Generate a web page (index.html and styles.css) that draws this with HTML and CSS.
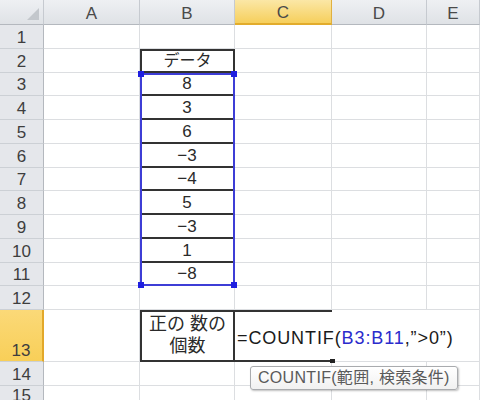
FILE: index.html
```html
<!DOCTYPE html>
<html lang="ja">
<head>
<meta charset="utf-8">
<link rel="stylesheet" href="styles.css">
</head>
<body>
<div class="sheet">
  <div class="h corner"><span class="tri"></span></div>
  <div class="h">A</div>
  <div class="h">B</div>
  <div class="h on">C</div>
  <div class="h">D</div>
  <div class="h">E</div>

  <div class="r">1</div><div class="c"></div><div class="c"></div><div class="c"></div><div class="c"></div><div class="c"></div>
  <div class="r">2</div><div class="c"></div><div class="c box">データ</div><div class="c"></div><div class="c"></div><div class="c"></div>
  <div class="r">3</div><div class="c"></div><div class="c v">8</div><div class="c"></div><div class="c"></div><div class="c"></div>
  <div class="r">4</div><div class="c"></div><div class="c v">3</div><div class="c"></div><div class="c"></div><div class="c"></div>
  <div class="r">5</div><div class="c"></div><div class="c v">6</div><div class="c"></div><div class="c"></div><div class="c"></div>
  <div class="r">6</div><div class="c"></div><div class="c v">−3</div><div class="c"></div><div class="c"></div><div class="c"></div>
  <div class="r">7</div><div class="c"></div><div class="c v">−4</div><div class="c"></div><div class="c"></div><div class="c"></div>
  <div class="r">8</div><div class="c"></div><div class="c v">5</div><div class="c"></div><div class="c"></div><div class="c"></div>
  <div class="r">9</div><div class="c"></div><div class="c v">−3</div><div class="c"></div><div class="c"></div><div class="c"></div>
  <div class="r">10</div><div class="c"></div><div class="c v">1</div><div class="c"></div><div class="c"></div><div class="c"></div>
  <div class="r">11</div><div class="c"></div><div class="c v last">−8</div><div class="c"></div><div class="c"></div><div class="c"></div>
  <div class="r">12</div><div class="c"></div><div class="c"></div><div class="c"></div><div class="c"></div><div class="c"></div>
  <div class="r on">13</div><div class="c"></div><div class="c label">正の 数の<br>個数</div><div class="c edit"><span class="formula">=COUNTIF(<span class="ref">B3:B11</span>,”&gt;0”)</span><span class="fill"></span></div><div class="c open"></div><div class="c"></div>
  <div class="r">14</div><div class="c"></div><div class="c"></div><div class="c"></div><div class="c"></div><div class="c"></div>
  <div class="r">15</div><div class="c"></div><div class="c"></div><div class="c"></div><div class="c"></div><div class="c"></div>

  <div class="sel">
    <span class="hd tl"></span><span class="hd tr"></span><span class="hd bl"></span><span class="hd br"></span>
  </div>
</div>
<div class="tip">COUNTIF(範囲, 検索条件)</div>
</body>
</html>
```

FILE: styles.css
```css
* { box-sizing: border-box; }
html, body {
  margin: 0;
  width: 480px;
  height: 400px;
  overflow: hidden;
  background: #fff;
}
body {
  position: relative;
  font-family: "Liberation Sans", "Noto Sans CJK JP", sans-serif;
  color: #222;
}
.sheet {
  display: grid;
  grid-template-columns: 44px 96px 95px 97px 95px 1fr;
  grid-template-rows: 25px repeat(12, 23.75px) 52px 24px 1fr;
  height: 400px;
  position: relative;
}
.h {
  background: linear-gradient(#eef0f3, #dfe2e6);
  border-right: 1px solid #c6cad0;
  border-bottom: 1px solid #b4b8be;
  display: flex;
  align-items: center;
  justify-content: center;
  padding-top: 3px;
  font-size: 17px;
  color: #4a4a4a;
}
.h.on {
  background: linear-gradient(#fbe7a6, #f6cf5c);
  border-bottom: 2px solid #e2ac2c;
  border-right-color: #e0b040;
}
.corner {
  position: relative;
}
.tri {
  position: absolute;
  right: 4px;
  bottom: 4px;
  width: 0;
  height: 0;
  border-left: 12px solid transparent;
  border-bottom: 12px solid #c3c7cc;
}
.r {
  background: #e5e7eb;
  border-right: 1px solid #b4b8be;
  border-bottom: 1px solid #ccd0d5;
  display: flex;
  align-items: flex-end;
  justify-content: center;
  font-size: 17px;
  line-height: 20px;
  color: #3e3e3e;
}
.r.on {
  background: linear-gradient(#fbd978, #f8cf58);
  border-right: 2px solid #e2a82a;
}
.c {
  border-right: 1px solid #dcdee1;
  border-bottom: 1px solid #dcdee1;
  display: flex;
  align-items: flex-end;
  justify-content: center;
  font-size: 17px;
  line-height: 20px;
  color: #2a2a2a;
}
.box {
  border: 2px solid #333;
  font-size: 16px;
  align-items: center;
  padding-top: 1px;
}
.v {
  border-bottom: 2px solid #333;
}
.v.last {
  border-bottom-color: transparent;
}
.label {
  border: 2px solid #333;
  align-items: center;
  text-align: center;
  font-size: 18px;
  line-height: 22px;
  padding-bottom: 2px;
}
.edit {
  position: relative;
  border-top: 2px solid #333;
  border-bottom: 2px solid #333;
  border-right: none;
  justify-content: flex-start;
  align-items: center;
  white-space: nowrap;
  overflow: visible;
  padding-left: 2px;
  padding-top: 3px;
}
.formula {
  font-size: 18px;
  letter-spacing: 0.9px;
  color: #1a1a1a;
}
.ref {
  color: #2b2bcc;
}
.fill {
  position: absolute;
  right: -3px;
  bottom: -3px;
  width: 5px;
  height: 4px;
  background: #222;
}
.open {
  border-right: none;
}
.sel {
  position: absolute;
  grid-row: 4 / 13;
  grid-column: 3 / 4;
  inset: 0;
  border: 2px solid #3d3dd6;
  pointer-events: none;
}
.hd {
  position: absolute;
  width: 6px;
  height: 6px;
  background: #1f1fe0;
}
.tl { left: -4px; top: -4px; }
.tr { right: -4px; top: -4px; }
.bl { left: -4px; bottom: -4px; }
.br { right: -4px; bottom: -4px; }
.tip {
  position: absolute;
  left: 250px;
  top: 366px;
  width: 208px;
  height: 24px;
  border: 1px solid #a9abae;
  border-radius: 3px;
  background: linear-gradient(#ffffff, #f1f1f1);
  box-shadow: 1px 1px 2px rgba(0,0,0,0.25);
  font-size: 16px;
  letter-spacing: 0.3px;
  line-height: 22px;
  padding-left: 7px;
  color: #5a5a5a;
  white-space: nowrap;
}
```
